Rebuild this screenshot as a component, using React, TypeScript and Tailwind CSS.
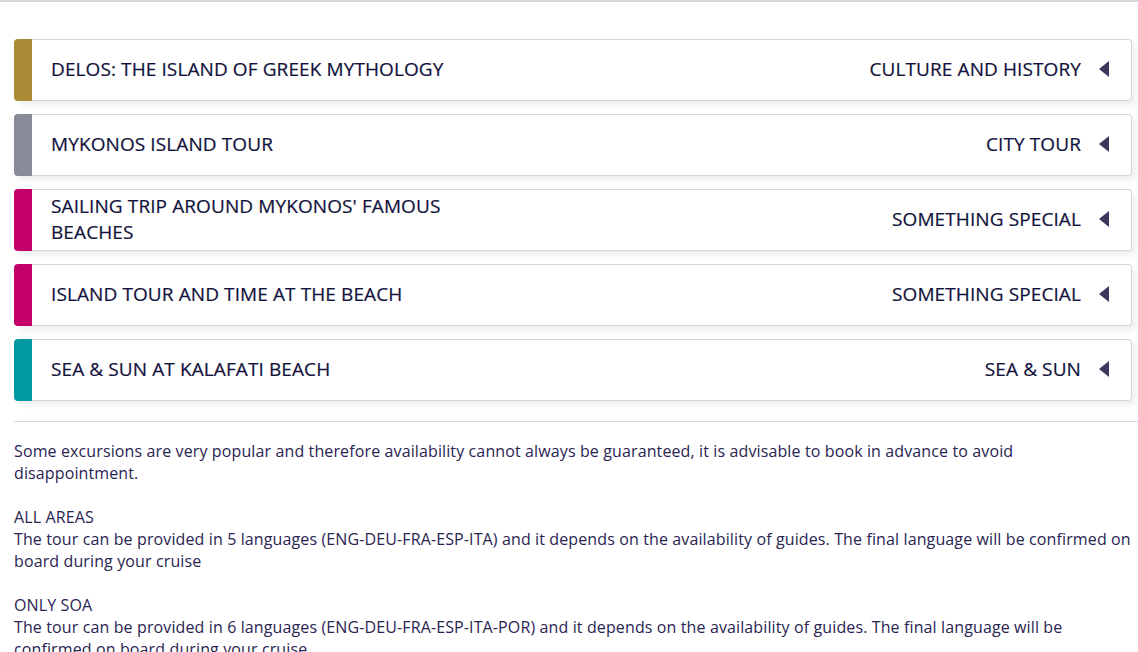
import React from "react";

const items = [
  { title: "DELOS: THE ISLAND OF GREEK MYTHOLOGY", cat: "CULTURE AND HISTORY", color: "bg-[#a98a35]" },
  { title: "MYKONOS ISLAND TOUR", cat: "CITY TOUR", color: "bg-[#878b97]" },
  { title: "SAILING TRIP AROUND MYKONOS' FAMOUS BEACHES", cat: "SOMETHING SPECIAL", color: "bg-[#c4006b]" },
  { title: "ISLAND TOUR AND TIME AT THE BEACH", cat: "SOMETHING SPECIAL", color: "bg-[#c4006b]" },
  { title: "SEA & SUN AT KALAFATI BEACH", cat: "SEA & SUN", color: "bg-[#0098a1]" },
];

export default function App() {
  return (
    <div className="w-[1138px] h-[652px] overflow-hidden bg-white font-['Open_Sans',sans-serif]">
      <div className="h-[2px] bg-[#d6d6dc]" />
      <div className="pl-[14px] pt-[37px]">
        <div className="flex flex-col gap-[13px] pr-[6px]">
          {items.map((it, i) => (
            <div
              key={i}
              className="flex h-[62px] rounded-[4px] bg-white shadow-[4px_4px_6px_rgba(0,0,0,0.07)]"
            >
              <div className={`w-[18px] shrink-0 rounded-l-[4px] ${it.color}`} />
              <div className="flex flex-1 items-center border border-l-0 border-[#d5d5dd] rounded-r-[4px] pl-[19px] pr-[22px] pb-[3px]">
                <div className="w-[440px] text-[19px] leading-[26px] tracking-[0.1px] [-webkit-text-stroke:0.2px_#12123c] text-[#12123c]">{it.title}</div>
                <div className="flex-1 flex items-center justify-end">
                  <span className="text-[19px] leading-[26px] tracking-[0.1px] [-webkit-text-stroke:0.2px_#12123c] text-[#12123c]">{it.cat}</span>
                  <svg width="10" height="16" viewBox="0 0 10 16" className="ml-[18px] mt-[1px]">
                    <polygon points="10,0 10,16 0,8" fill="#3b3a5e" />
                  </svg>
                </div>
              </div>
            </div>
          ))}
        </div>
        <div className="mt-[20px] h-px bg-[#d6d6dc]" />
        <div className="pt-[18px] pr-[6px] text-[16px] leading-[22px] tracking-[0.12px] text-[#2a2452]">
          <p>
            Some excursions are very popular and therefore availability cannot always be guaranteed, it is advisable to book in advance to avoid disappointment.
          </p>
          <p className="mt-[22px]">ALL AREAS</p>
          <p>
            The tour can be provided in 5 languages (ENG-DEU-FRA-ESP-ITA) and it depends on the availability of guides. The final language will be confirmed on board during your cruise
          </p>
          <p className="mt-[22px]">ONLY SOA</p>
          <p>
            The tour can be provided in 6 languages (ENG-DEU-FRA-ESP-ITA-POR) and it depends on the availability of guides. The final language will be confirmed on board during your cruise
          </p>
        </div>
      </div>
    </div>
  );
}
